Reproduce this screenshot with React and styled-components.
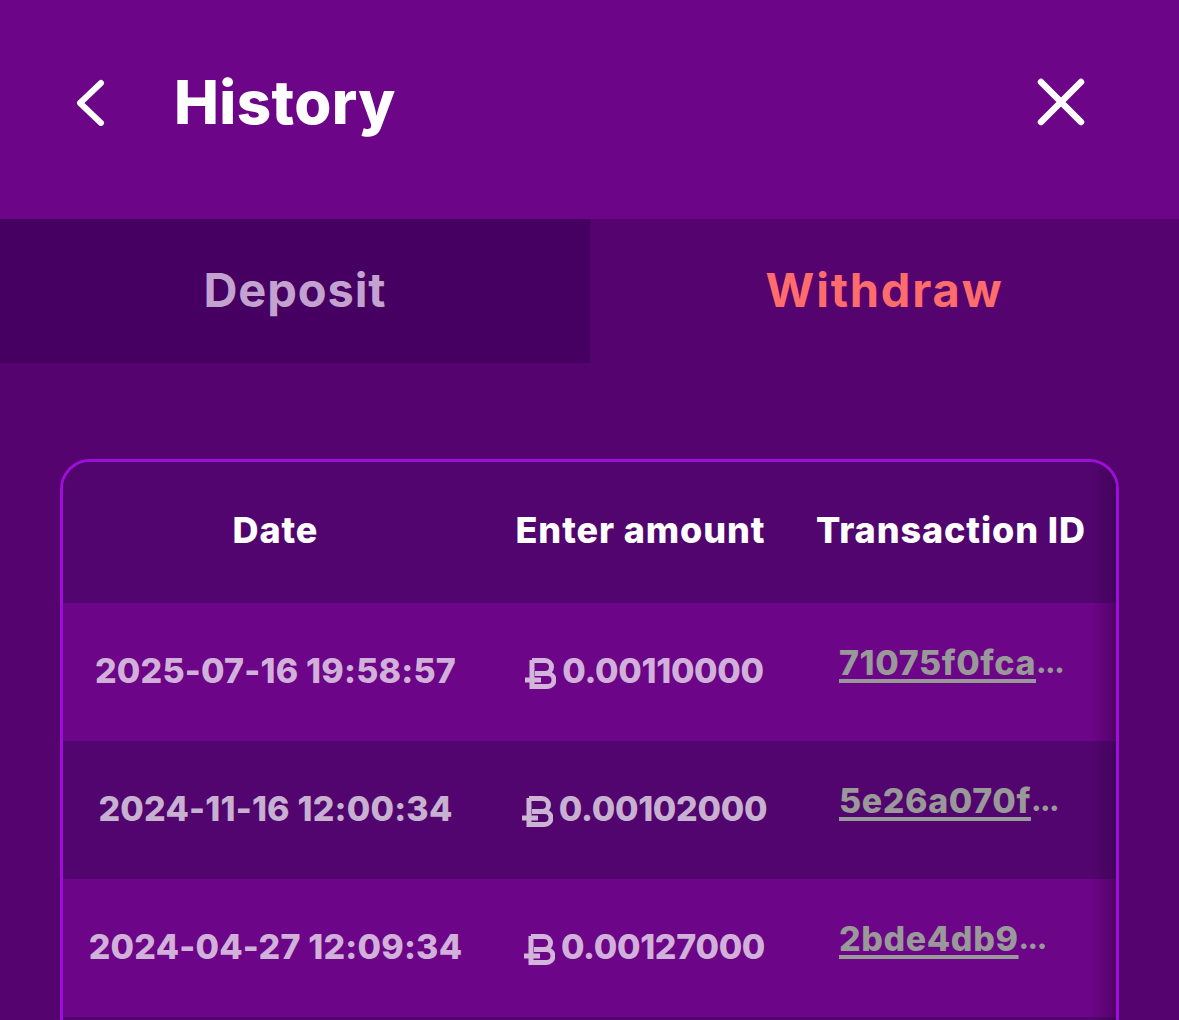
import styled, { createGlobalStyle } from 'styled-components';

const Global = createGlobalStyle`
  html, body {
    margin: 0;
    padding: 0;
    height: 1020px;
    overflow: hidden;
    background: #55036f;
    font-family: Inter, "Noto Sans", "Liberation Sans", sans-serif;
  }
`;

const rows = [
  { date: '2025-07-16 19:58:57', amount: '0.00110000', tx: '71075f0fca', tone: 'light' },
  { date: '2024-11-16 12:00:34', amount: '0.00102000', tx: '5e26a070f', tone: 'dark' },
  { date: '2024-04-27 12:09:34', amount: '0.00127000', tx: '2bde4db9', tone: 'light' },
  { date: '', amount: '', tx: '', tone: 'dark' },
];

const Page = styled.div`
  width: 1179px;
  height: 1020px;
  overflow: hidden;
  background: #55036f;
`;

const Header = styled.header`
  height: 219px;
  background: #6c0587;
  display: flex;
  align-items: center;
  padding: 0 94px 16px 72px;
  box-sizing: border-box;
  color: #fff;
`;

const IconBtn = styled.button`
  background: none;
  border: 0;
  padding: 0;
  display: flex;
  color: #fff;
`;

const Title = styled.h1`
  margin: 0 0 0 66px;
  flex: 1;
  font-size: 60px;
  font-weight: 800;
  letter-spacing: 0.4px;
  line-height: 1;
`;

const Tabs = styled.div`
  display: grid;
  grid-template-columns: 590px 1fr;
  height: 144px;
`;

const Tab = styled.div`
  display: flex;
  align-items: center;
  justify-content: center;
  padding-bottom: 4px;
  font-size: 47px;
  font-weight: 700;
  letter-spacing: ${(p) => (p.$active ? '1.8px' : '0.9px')};
  background: ${(p) => (p.$active ? '#55036f' : '#460062')};
  color: ${(p) => (p.$active ? '#ff6c6c' : '#c3a2cf')};
`;

const Content = styled.div`
  padding: 96px 60px 0;
`;

const Table = styled.div`
  border: 3px solid #9b0fd9;
  border-radius: 30px;
  overflow: hidden;
  position: relative;

  &::after {
    content: '';
    position: absolute;
    top: 0;
    right: 0;
    bottom: 0;
    width: 24px;
    background: linear-gradient(to right, rgba(50, 0, 70, 0), rgba(50, 0, 70, 0.45));
    pointer-events: none;
  }
`;

const Row = styled.div`
  display: grid;
  grid-template-columns: 425px 305px 316px;
  align-items: center;
  height: ${(p) => (p.$head ? '141px' : '138px')};
  background: ${(p) => (p.$tone === 'light' ? '#6c0587' : '#52056e')};
`;

const HeadCell = styled.div`
  text-align: center;
  padding-bottom: 6px;
  font-size: 36px;
  font-weight: 800;
  letter-spacing: 0.9px;
  color: #fff;
  white-space: nowrap;
`;

const Cell = styled.div`
  display: flex;
  align-items: center;
  justify-content: center;
  padding-bottom: 4px;
  font-size: 34px;
  font-weight: 800;
  letter-spacing: 0.2px;
  color: rgba(255, 255, 255, 0.7);
  white-space: nowrap;
`;

const AmountCell = styled(Cell)`
  padding-left: 7px;
  letter-spacing: -0.3px;
`;

const Baht = styled.svg`
  width: 32px;
  height: 34px;
  margin: 6px 6px 0 0;
  flex: none;
`;

const TxCell = styled(Cell)`
  justify-content: flex-start;
  padding-left: 46px;
  margin-top: -16px;
  letter-spacing: 0.6px;
  color: #999;
`;

const TxLink = styled.span`
  text-decoration: underline;
  text-decoration-thickness: 4px;
  text-underline-offset: 4px;
`;

const Dots = styled.span`
  font-size: 30px;
  letter-spacing: -1.5px;
`;

function BahtIcon() {
  return (
    <Baht viewBox="0 0 32 34" fill="none" stroke="currentColor" strokeWidth="5">
      <path d="M8 4.5H21a6.5 6.5 0 0 1 0 13H11M1 24H17M14 17.5h9.5a6.5 6.5 0 0 1 0 13H8V4" />
    </Baht>
  );
}

export default function App() {
  return (
    <Page>
      <Global />
      <Header>
        <IconBtn aria-label="Back">
          <svg width="36" height="48" viewBox="0 0 36 48" fill="none" stroke="currentColor" strokeWidth="6" strokeLinecap="round" strokeLinejoin="round">
            <path d="M29 5 8 25l21 20" />
          </svg>
        </IconBtn>
        <Title>History</Title>
        <IconBtn aria-label="Close">
          <svg width="48" height="48" viewBox="0 0 48 48" fill="none" stroke="currentColor" strokeWidth="6.5" strokeLinecap="round">
            <path d="M4 4l40 40M44 4 4 44" />
          </svg>
        </IconBtn>
      </Header>
      <Tabs>
        <Tab>Deposit</Tab>
        <Tab $active>Withdraw</Tab>
      </Tabs>
      <Content>
        <Table>
          <Row $head $tone="dark">
            <HeadCell>Date</HeadCell>
            <HeadCell>Enter amount</HeadCell>
            <HeadCell>Transaction ID</HeadCell>
          </Row>
          {rows.map((r, i) => (
            <Row key={i} $tone={r.tone}>
              <Cell>{r.date}</Cell>
              <AmountCell>
                {r.amount && <BahtIcon />}
                {r.amount}
              </AmountCell>
              <TxCell>
                <TxLink>{r.tx}</TxLink>
                {r.tx && <Dots>...</Dots>}
              </TxCell>
            </Row>
          ))}
        </Table>
      </Content>
    </Page>
  );
}
